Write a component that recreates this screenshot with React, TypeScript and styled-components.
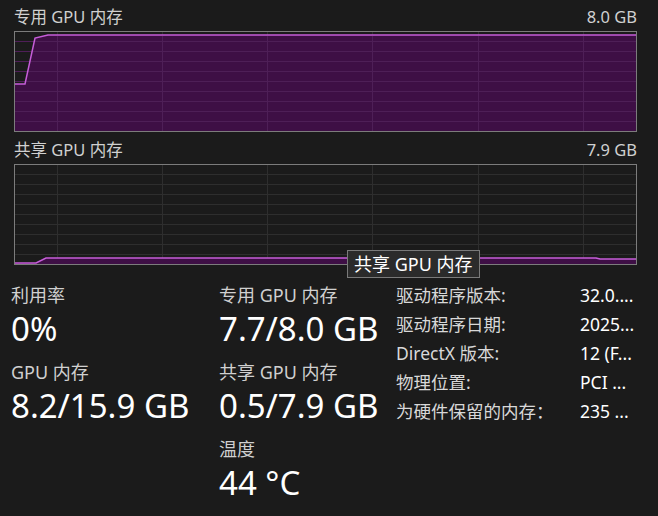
import React from "react";
import styled, { createGlobalStyle } from "styled-components";

const GlobalStyle = createGlobalStyle`
  html, body {
    margin: 0;
    padding: 0;
    background: #1b1b1b;
  }
  body {
    font-family: "Segoe UI", "Noto Sans", "Noto Sans CJK SC", sans-serif;
    color: #ffffff;
  }
`;

const CHART_W = 623;
const CHART_H = 101;
const gridCols = [43, 148, 253, 358, 464, 569];
const gridRows = [10, 20, 30, 40, 50, 60, 70, 80, 90];

const Page = styled.div`
  width: 658px;
  height: 516px;
  box-sizing: border-box;
  padding: 4px 0 0 14px;
  overflow: hidden;
`;

const ChartSection = styled.section`
  width: ${CHART_W}px;
  margin-bottom: 5px;
`;

const ChartHeader = styled.div`
  display: flex;
  justify-content: space-between;
  align-items: center;
  height: 24px;
  margin-bottom: 3px;
  font-size: 16.5px;
  color: #d0d0d0;
`;

const ChartBody = styled.div`
  position: relative;
  width: ${CHART_W}px;
  height: ${CHART_H}px;
`;

const Tooltip = styled.div`
  position: absolute;
  left: 333px;
  top: 86px;
  padding: 0 6px;
  background: #2b2b2b;
  border: 1px solid #7a7a7a;
  font-size: 18px;
  line-height: 26px;
  color: #ffffff;
  white-space: nowrap;
`;

type ChartProps = {
  points: [number, number][];
  fillGrid?: boolean;
};

const MemoryChart = ({ points, fillGrid }: ChartProps) => {
  const line = points.map(p => p.join(",")).join(" ");
  const area = `0,${CHART_H - 1} ${line} ${CHART_W - 1},${CHART_H - 1}`;
  return (
    <svg width={CHART_W} height={CHART_H} style={{ display: "block" }}>
      {gridRows.map(y => (
        <line key={`r${y}`} x1={1} x2={CHART_W - 1} y1={y + 0.5} y2={y + 0.5} stroke="#2e2e2e" />
      ))}
      {gridCols.map(x => (
        <line key={`c${x}`} x1={x + 0.5} x2={x + 0.5} y1={1} y2={CHART_H - 1} stroke="#2e2e2e" />
      ))}
      <polygon points={area} fill="#3f0f47" fillOpacity={0.96} />
      {fillGrid && (
        <g>
          {gridRows.map(y => (
            <line key={`fr${y}`} x1={1} x2={CHART_W - 1} y1={y + 0.5} y2={y + 0.5} stroke="#4e1f57" />
          ))}
          {gridCols.map(x => (
            <line key={`fc${x}`} x1={x + 0.5} x2={x + 0.5} y1={5} y2={CHART_H - 1} stroke="#4e1f57" />
          ))}
        </g>
      )}
      <polyline points={line} fill="none" stroke="#c65ed9" strokeWidth={1.5} />
      <rect x={0.5} y={0.5} width={CHART_W - 1} height={CHART_H - 1} fill="none" stroke="#7c7c7c" />
    </svg>
  );
};

const Stats = styled.div`
  display: grid;
  grid-template-columns: 208px 177px 184px 1fr;
  margin-left: -3px;
  margin-top: 19px;
`;

const StatColumn = styled.div`
  display: flex;
  flex-direction: column;
  gap: 10px;
`;

const Stat = styled.div`
  display: flex;
  flex-direction: column;
`;

const StatLabel = styled.div`
  font-size: 18px;
  line-height: 22px;
  color: #d0d0d0;
`;

const StatValue = styled.div`
  font-size: 33px;
  line-height: 45px;
  color: #ffffff;
`;

const InfoColumn = styled.div<{ $value?: boolean }>`
  display: flex;
  flex-direction: column;
  margin-top: -3px;
  font-size: 17.5px;
  color: ${p => (p.$value ? "#ffffff" : "#d8d8d8")};
`;

const InfoRow = styled.div`
  height: 29px;
  line-height: 29px;
  white-space: nowrap;
`;

const dedicated: [number, number][] = [
  [0, 53],
  [11, 53],
  [21, 7],
  [34, 4],
  [622, 4],
];

const shared: [number, number][] = [
  [0, 99],
  [22, 99],
  [32, 94],
  [582, 94],
  [586, 95],
  [622, 95],
];

const info = [
  ["驱动程序版本:", "32.0...."],
  ["驱动程序日期:", "2025..."],
  ["DirectX 版本:", "12 (F..."],
  ["物理位置:", "PCI ..."],
  ["为硬件保留的内存：", "235 ..."],
];

export default function App() {
  return (
    <Page>
      <GlobalStyle />
      <ChartSection>
        <ChartHeader>
          <span>专用 GPU 内存</span>
          <span>8.0 GB</span>
        </ChartHeader>
        <ChartBody>
          <MemoryChart points={dedicated} fillGrid />
        </ChartBody>
      </ChartSection>
      <ChartSection>
        <ChartHeader>
          <span>共享 GPU 内存</span>
          <span>7.9 GB</span>
        </ChartHeader>
        <ChartBody>
          <MemoryChart points={shared} />
          <Tooltip>共享 GPU 内存</Tooltip>
        </ChartBody>
      </ChartSection>
      <Stats>
        <StatColumn>
          <Stat>
            <StatLabel>利用率</StatLabel>
            <StatValue>0%</StatValue>
          </Stat>
          <Stat>
            <StatLabel>GPU 内存</StatLabel>
            <StatValue>8.2/15.9 GB</StatValue>
          </Stat>
        </StatColumn>
        <StatColumn>
          <Stat>
            <StatLabel>专用 GPU 内存</StatLabel>
            <StatValue>7.7/8.0 GB</StatValue>
          </Stat>
          <Stat>
            <StatLabel>共享 GPU 内存</StatLabel>
            <StatValue>0.5/7.9 GB</StatValue>
          </Stat>
          <Stat>
            <StatLabel>温度</StatLabel>
            <StatValue>44 °C</StatValue>
          </Stat>
        </StatColumn>
        <InfoColumn>
          {info.map(([k]) => (
            <InfoRow key={k}>{k}</InfoRow>
          ))}
        </InfoColumn>
        <InfoColumn $value>
          {info.map(([k, v]) => (
            <InfoRow key={k}>{v}</InfoRow>
          ))}
        </InfoColumn>
      </Stats>
    </Page>
  );
}
